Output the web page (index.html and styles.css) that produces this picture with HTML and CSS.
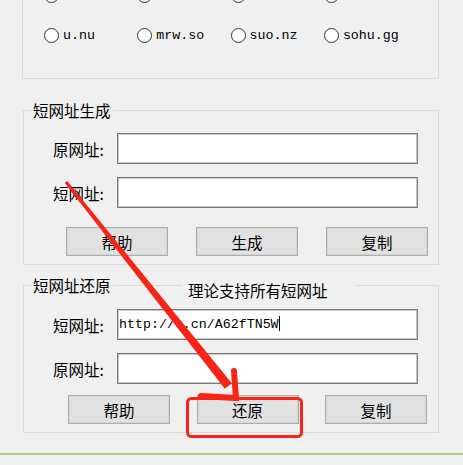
FILE: index.html
```html
<!DOCTYPE html>
<html lang="zh-CN">
<head>
    <meta charset="UTF-8">
    <meta name="viewport" content="width=device-width, initial-scale=1.0">
    <title>短网址生成与还原</title>
    <link rel="stylesheet" href="styles.css">
</head>
<body>

    <div class="group group-top">
        <div class="radio-row">
            <span class="radio"><span class="dot"></span></span>
            <span class="radio"><span class="dot"></span></span>
            <span class="radio"><span class="dot"></span></span>
            <span class="radio"><span class="dot"></span></span>
        </div>
        <div class="radio-row">
            <span class="radio"><span class="dot"></span>u.nu</span>
            <span class="radio"><span class="dot"></span>mrw.so</span>
            <span class="radio"><span class="dot"></span>suo.nz</span>
            <span class="radio"><span class="dot"></span>sohu.gg</span>
        </div>
    </div>

    <fieldset class="group group-make">
        <legend>短网址生成</legend>
        <div class="field">
            <label>原网址:</label>
            <div class="textbox"></div>
        </div>
        <div class="field">
            <label>短网址:</label>
            <div class="textbox"></div>
        </div>
        <div class="buttons">
            <button>帮助</button>
            <button>生成</button>
            <button>复制</button>
        </div>
    </fieldset>

    <fieldset class="group group-restore">
        <legend>短网址还原</legend>
        <div class="field">
            <label>短网址:</label>
            <div class="textbox">http://t.cn/A62fTN5W<span class="caret"></span></div>
        </div>
        <div class="field field-gap">
            <label>原网址:</label>
            <div class="textbox"></div>
        </div>
        <div class="buttons">
            <button>帮助</button>
            <button>还原</button>
            <button>复制</button>
        </div>
    </fieldset>

    <!-- label that sits over the group border -->
    <span class="hint">理论支持所有短网址</span>

    <div class="statusline"></div>

    <!-- screenshot annotation -->
    <svg class="annotation" width="463" height="465" viewBox="0 0 463 465">
        <polygon points="67.2,181.1 231.8,383.2 224.8,388.8 64.8,182.9" fill="#f82418"/>
        <polyline points="201,396 236,398 234,371" fill="none" stroke="#f82418" stroke-width="6" stroke-linejoin="miter" stroke-linecap="round"/>
        <rect x="187.5" y="398.5" width="114" height="38" rx="4" fill="none" stroke="#f82418" stroke-width="3"/>
    </svg>

</body>
</html>
```

FILE: styles.css
```css
body {
    margin: 0;
    width: 463px;
    height: 465px;
    overflow: hidden;
    position: relative;
    background-color: #f0f0f0;
    font-family: "Noto Sans CJK SC", "Noto Sans", sans-serif;
    font-size: 15.5px;
    color: #000;
}
.group {
    box-sizing: border-box;
    width: 417px;
    border: 1px solid #dcdcdc;
}
.group-top {
    margin: -60px 0 0 22px;
    height: 139px;
    padding: 34px 0 0 21px;
}
.radio-row {
    height: 40px;
    display: grid;
    grid-template-columns: 93.3px 93.3px 93.3px 93.3px;
    align-items: center;
}
.radio {
    display: flex;
    align-items: center;
    gap: 4px;
    font-family: "Liberation Mono", monospace;
    font-size: 13.3px;
}
.dot {
    box-sizing: border-box;
    width: 15px;
    height: 15px;
    border: 1px solid #333;
    border-radius: 50%;
    background-color: #fff;
}
fieldset.group {
    margin: 22px 0 0 23px;
    width: 416px;
    padding: 14px 0 8px 0;
    min-width: 0;
}
legend {
    margin-left: 7px;
    padding: 0 2px;
    line-height: 18px;
}
fieldset.group-restore {
    margin-top: 11px;
    padding-top: 15px;
}
.field {
    display: flex;
    align-items: center;
    padding: 0 20px 0 29px;
    margin-bottom: 13px;
}
.field-gap {
    margin-top: 8px;
    margin-bottom: 11px;
}
.field label {
    width: 64px;
    line-height: 18px;
}
.textbox {
    flex: 1;
    box-sizing: border-box;
    height: 31px;
    border: 1px solid #7a7a7a;
    box-shadow: inset 0 0 0 1px #c8c8c8;
    background-color: #fff;
    padding-left: 1px;
    font-family: "Liberation Mono", monospace;
    font-size: 13.3px;
    line-height: 29px;
    white-space: nowrap;
}
.caret {
    display: inline-block;
    width: 1px;
    height: 15px;
    background-color: #000;
    vertical-align: -3px;
}
.buttons {
    display: flex;
    justify-content: space-between;
    padding: 6px 10px 0 42px;
}
.group-restore .buttons {
    padding: 0 11px 0 44px;
}
button {
    box-sizing: border-box;
    width: 102px;
    height: 29px;
    padding: 0;
    border: 1px solid #adadad;
    box-shadow: inset 0 0 0 1px #d4d4d4;
    background-color: #e1e1e1;
    font-family: inherit;
    font-size: 15.5px;
    color: #000;
}
.hint {
    position: absolute;
    left: 182px;
    top: 281px;
    width: 167px;
    padding-left: 6px;
    line-height: 18px;
    background-color: #f0f0f0;
}
.statusline {
    margin-top: 20px;
    height: 2px;
    background-color: #b1cc86;
}
.annotation {
    position: absolute;
    left: 0;
    top: 0;
    pointer-events: none;
}
```
